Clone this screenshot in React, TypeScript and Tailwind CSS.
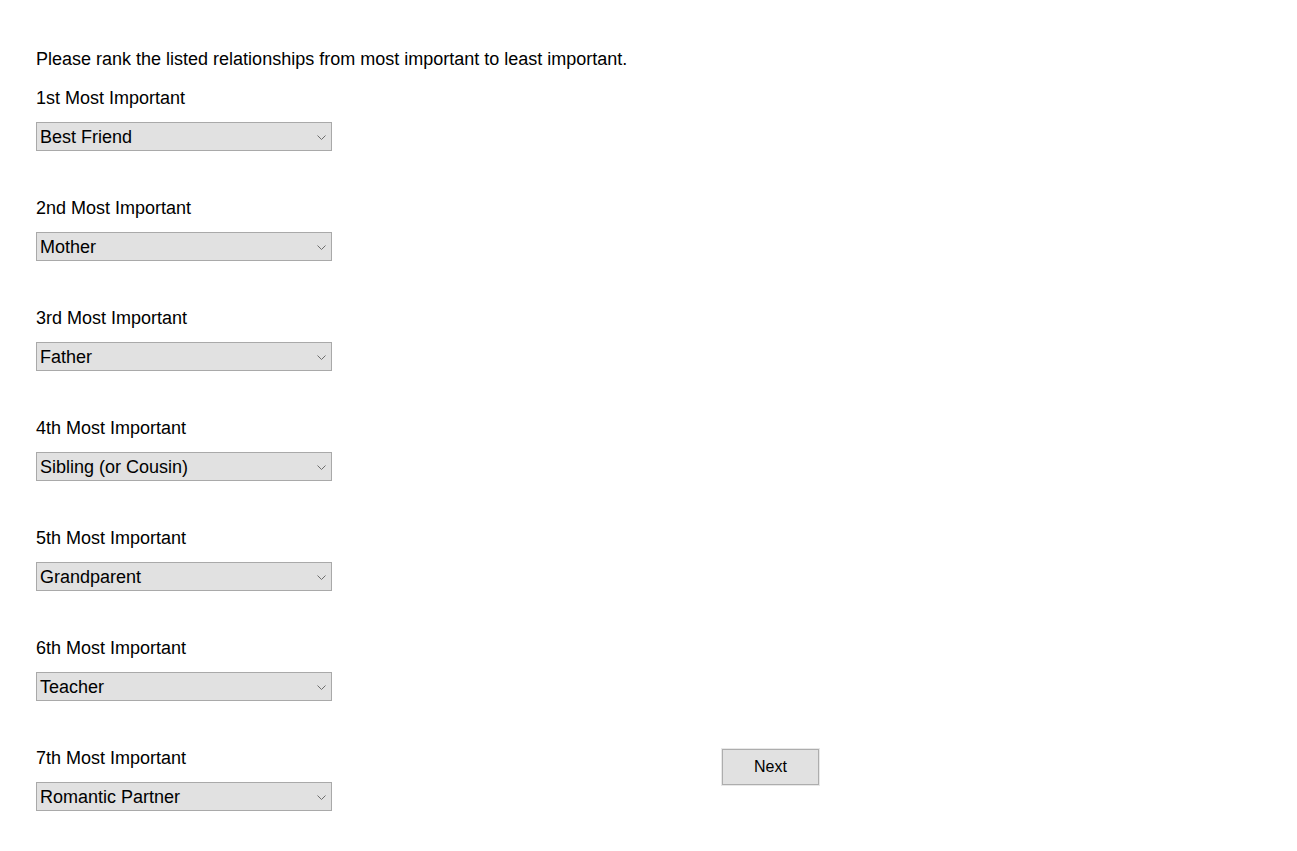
import React from "react";

const items = [
  ["1st Most Important", "Best Friend"],
  ["2nd Most Important", "Mother"],
  ["3rd Most Important", "Father"],
  ["4th Most Important", "Sibling (or Cousin)"],
  ["5th Most Important", "Grandparent"],
  ["6th Most Important", "Teacher"],
  ["7th Most Important", "Romantic Partner"],
];

function Select({ value }: { value: string }) {
  return (
    <div className="relative mt-[15px] h-[29px] w-[296px] border border-[#a9a9a9] bg-[#e1e1e1]">
      <div className="pl-[3px] pt-[1px] text-[18px] leading-[27px] text-black">{value}</div>
      <svg
        className="absolute right-[5px] top-[12px]"
        width="9"
        height="5"
        viewBox="0 0 9 5"
      >
        <path d="M0.5 0.5 L4.5 4.5 L8.5 0.5" fill="none" stroke="#6d6d6d" strokeWidth="1" />
      </svg>
    </div>
  );
}

function Group({ label, value, first }: { label: string; value: string; first?: boolean }) {
  return (
    <div className={first ? "mt-[21px]" : "mt-[48px]"}>
      <div className="h-[18px] text-[18px] leading-[18px] text-black">{label}</div>
      <Select value={value} />
    </div>
  );
}

export default function App() {
  return (
    <div
      className="min-h-[851px] bg-white pl-[36px] pt-[50px] text-black"
      style={{ fontFamily: '"Liberation Sans", Arial, sans-serif' }}
    >
      <div className="h-[18px] text-[18px] leading-[18px]">
        Please rank the listed relationships from most important to least important.
      </div>
      {items.slice(0, 6).map(([l, v], i) => (
        <Group key={l} label={l} value={v} first={i === 0} />
      ))}
      <div className="flex items-start">
        <Group label={items[6][0]} value={items[6][1]} />
        <button className="ml-[390px] mt-[48px] h-[36px] w-[97px] border border-[#adadad] bg-[#e1e1e1] text-[16px] text-black outline outline-1 outline-[#e8e8e8]">
          Next
        </button>
      </div>
    </div>
  );
}
